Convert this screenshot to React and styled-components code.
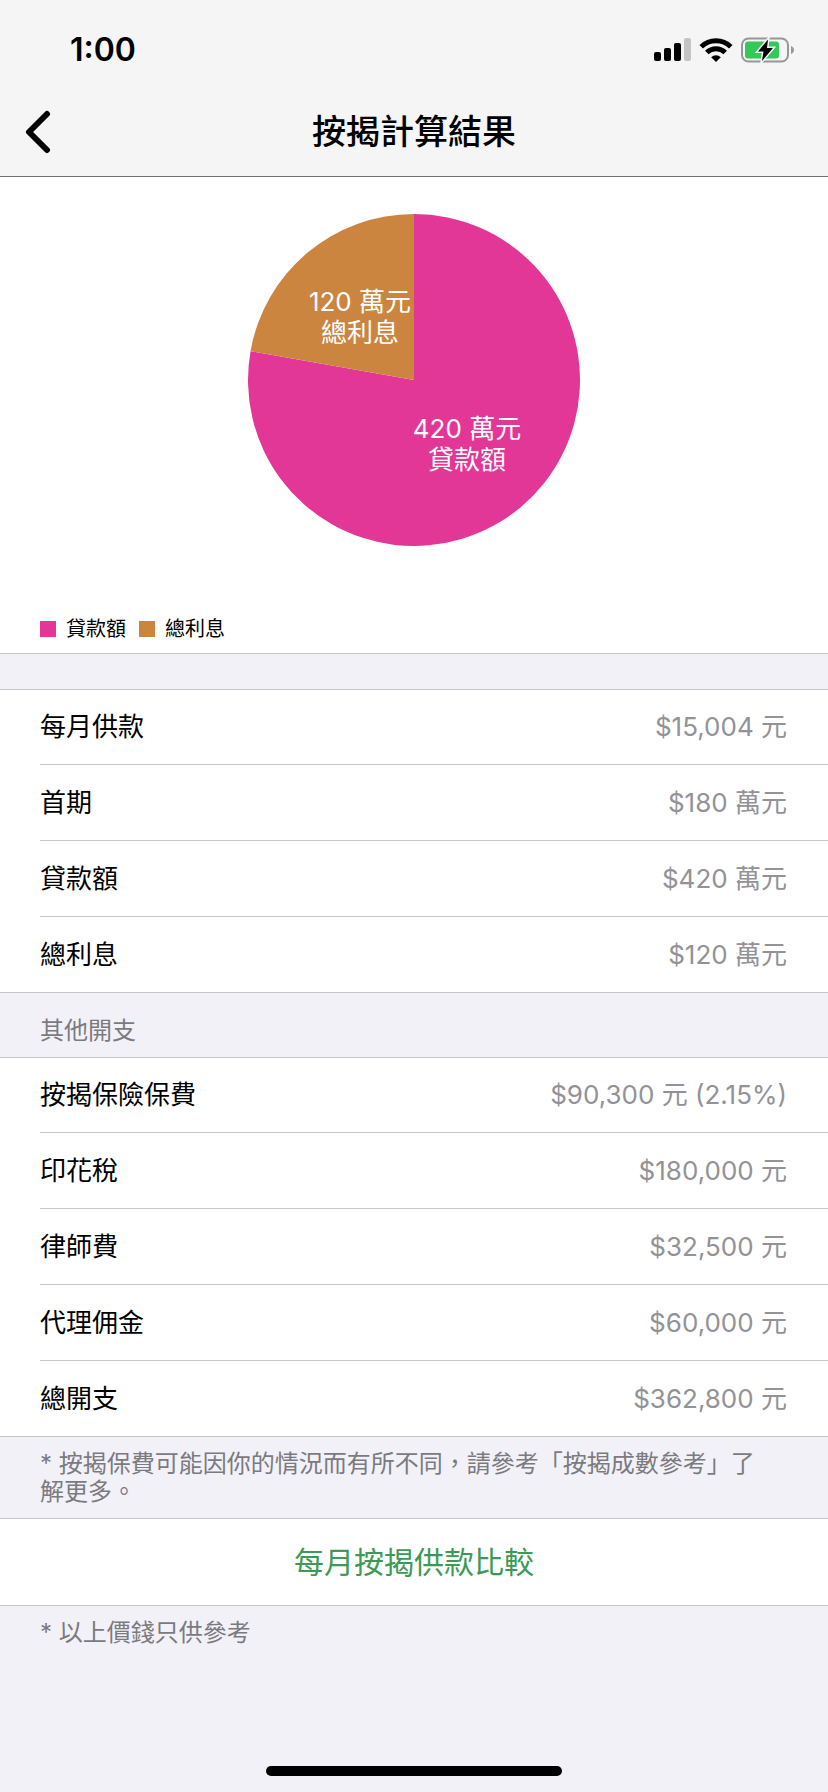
import styled, { createGlobalStyle } from 'styled-components';

const style = {
  pink: '#e23797',
  orange: '#cc853f',
  green: '#3c9a56',
  barColor: '#f5f5f5',
  pageColor: '#f2f1f7',
  lineColor: '#c6c6c8',
  valueColor: '#929297',
  noteColor: '#7a7a7f',
};

const GlobalStyle = createGlobalStyle`
  * {
    box-sizing: border-box;
  }

  body {
    margin: 0;
    background-color: ${style.pageColor};
    color: #000;
    font-family: Inter, 'Noto Sans CJK TC', sans-serif;
  }
`;

const Screen = styled.div`
  display: flex;
  flex-direction: column;
  min-height: 100vh;
`;

const StatusBar = styled.div`
  display: flex;
  justify-content: space-between;
  align-items: center;
  height: 100px;
  padding: 0 33px 0 70px;
  background-color: ${style.barColor};
`;

const Time = styled.time`
  font-size: 32px;
  font-weight: 600;
  line-height: 40px;
`;

const StatusIcons = styled.div`
  display: flex;
  align-items: center;
  gap: 8px;
`;

const NavBar = styled.header`
  display: grid;
  grid-template-columns: 1fr auto 1fr;
  align-items: center;
  height: 77px;
  padding: 0 24px 12px;
  border-bottom: 1px solid #6f6f72;
  background-color: ${style.barColor};
`;

const BackButton = styled.button`
  justify-self: start;
  display: flex;
  padding: 0;
  border: none;
  background: none;
  cursor: pointer;
`;

const Title = styled.h1`
  margin: 0;
  font-size: 34px;
  font-weight: 500;
  line-height: 44px;
`;

const ChartPanel = styled.section`
  padding: 37px 40px 10px;
  border-bottom: 1px solid ${style.lineColor};
  background-color: #fff;
`;

const Pie = styled.svg`
  display: block;
  margin: 0 auto;
`;

const PieLabel = styled.text`
  fill: #fff;
  font-size: 26px;
  text-anchor: middle;
`;

const Legend = styled.ul`
  display: flex;
  gap: 13px;
  margin: 69px 0 0;
  padding: 0;
  list-style: none;
`;

const LegendItem = styled.li`
  display: flex;
  align-items: center;
  gap: 10px;
  font-size: 20px;
  line-height: 28px;
`;

const Swatch = styled.span`
  width: 16px;
  height: 16px;
  background-color: ${props => props.$color};
`;

const Group = styled.dl`
  margin: ${props => (props.$spaced ? '35px' : '0')} 0 0;
  padding-left: 40px;
  border-top: 1px solid ${style.lineColor};
  border-bottom: 1px solid ${style.lineColor};
  background-color: #fff;
`;

const Row = styled.div`
  display: flex;
  justify-content: space-between;
  align-items: center;
  height: 76px;
  padding-right: 41px;
  font-size: 26px;
  line-height: 36px;

  &:first-child,
  &:last-child {
    height: 75px;
  }

  &:not(:last-child) {
    border-bottom: 1px solid ${style.lineColor};
  }
`;

const Name = styled.dt``;

const Value = styled.dd`
  margin: 0;
  color: ${style.valueColor};
`;

const SectionTitle = styled.h2`
  margin: 0;
  padding: 20px 40px 8px;
  color: ${style.noteColor};
  font-size: 24px;
  font-weight: 400;
  line-height: 36px;
`;

const Note = styled.p`
  margin: 0;
  padding: 13px 60px 12px 40px;
  color: ${style.noteColor};
  font-size: 24px;
  line-height: 28px;
`;

const CompareButton = styled.button`
  height: 88px;
  padding: 0 0 4px;
  border: solid ${style.lineColor};
  border-width: 1px 0;
  background-color: #fff;
  color: ${style.green};
  font-family: inherit;
  font-size: 30px;
  cursor: pointer;
`;

const HomeIndicator = styled.div`
  width: 296px;
  height: 10px;
  margin: auto auto 16px;
  border-radius: 5px;
  background-color: #000;
`;

const slices = [
  { name: '貸款額', amount: 420, color: style.pink, x: 219, y: 224 },
  { name: '總利息', amount: 120, color: style.orange, x: 112, y: 97 },
];

const payments = [
  ['每月供款', '$15,004 元'],
  ['首期', '$180 萬元'],
  ['貸款額', '$420 萬元'],
  ['總利息', '$120 萬元'],
];

const expenses = [
  ['按揭保險保費', '$90,300 元 (2.15%)'],
  ['印花稅', '$180,000 元'],
  ['律師費', '$32,500 元'],
  ['代理佣金', '$60,000 元'],
  ['總開支', '$362,800 元'],
];

const RADIUS = 166;

const getPoint = share => {
  const angle = share * 2 * Math.PI;
  return `${RADIUS + RADIUS * Math.sin(angle)} ${
    RADIUS - RADIUS * Math.cos(angle)
  }`;
};

function PieChart() {
  const total = slices.reduce((sum, slice) => sum + slice.amount, 0);
  let start = 0;

  return (
    <Pie width={RADIUS * 2} height={RADIUS * 2}>
      {slices.map(({ name, amount, color }) => {
        const end = start + amount / total;
        const large = end - start > 0.5 ? 1 : 0;
        const d = `M${RADIUS} ${RADIUS} L${getPoint(start)} A${RADIUS} ${RADIUS} 0 ${large} 1 ${getPoint(end)} Z`;
        start = end;
        return <path key={name} d={d} fill={color} />;
      })}
      {slices.map(({ name, amount, x, y }) => (
        <PieLabel key={name}>
          <tspan x={x} y={y}>
            {amount} 萬元
          </tspan>
          <tspan x={x} y={y + 31}>
            {name}
          </tspan>
        </PieLabel>
      ))}
    </Pie>
  );
}

function List({ items, spaced }) {
  return (
    <Group $spaced={spaced}>
      {items.map(([name, value]) => (
        <Row key={name}>
          <Name>{name}</Name>
          <Value>{value}</Value>
        </Row>
      ))}
    </Group>
  );
}

function SignalIcon() {
  return (
    <svg width="37" height="24" viewBox="0 0 37 24">
      <rect x="0" y="14" width="7" height="9" rx="2" />
      <rect x="10" y="10" width="7" height="13" rx="2" />
      <rect x="20" y="5" width="7" height="18" rx="2" />
      <rect x="30" y="0" width="7" height="23" rx="2" fill="#c4c4c4" />
    </svg>
  );
}

function WifiIcon() {
  return (
    <svg width="34" height="24" viewBox="0 0 34 24">
      <g fill="none" stroke="#000" strokeWidth="5">
        <path d="M2.2 8.8 A21 21 0 0 1 31.8 8.8" />
        <path d="M7.800 14.600 A13 13 0 0 1 26.200 14.600" />
      </g>
      <path d="M17 24 L12.200 19.200 A6.800 6.800 0 0 1 21.800 19.200 Z" />
    </svg>
  );
}

function BatteryIcon() {
  return (
    <svg width="54" height="26" viewBox="0 0 54 26">
      <rect
        x="1"
        y="1.5"
        width="46"
        height="23"
        rx="6.5"
        fill="none"
        stroke="#979797"
        strokeWidth="2"
      />
      <path d="M50 9 C54 10.5 54 15.5 50 17 Z" fill="#979797" />
      <rect x="4" y="4.5" width="34" height="17" rx="3" fill="#34c759" />
      <path
        d="M27 2.500 L17 14.500 H22.500 L21 24 L32 11 H26 Z"
        stroke={style.barColor}
        strokeWidth="3"
        paintOrder="stroke"
      />
    </svg>
  );
}

export default function App() {
  return (
    <Screen>
      <GlobalStyle />
      <StatusBar>
        <Time>1:00</Time>
        <StatusIcons>
          <SignalIcon />
          <WifiIcon />
          <BatteryIcon />
        </StatusIcons>
      </StatusBar>
      <NavBar>
        <BackButton type="button" aria-label="返回">
          <svg width="28" height="44" viewBox="0 0 28 44">
            <path
              d="M23 4 L5 22 L23 40"
              fill="none"
              stroke="#000"
              strokeWidth="6"
              strokeLinecap="round"
              strokeLinejoin="round"
            />
          </svg>
        </BackButton>
        <Title>按揭計算結果</Title>
      </NavBar>
      <ChartPanel>
        <PieChart />
        <Legend>
          {slices.map(({ name, color }) => (
            <LegendItem key={name}>
              <Swatch $color={color} />
              {name}
            </LegendItem>
          ))}
        </Legend>
      </ChartPanel>
      <List items={payments} spaced />
      <SectionTitle>其他開支</SectionTitle>
      <List items={expenses} />
      <Note>
        * 按揭保費可能因你的情況而有所不同，請參考「按揭成數參考」了解更多。
      </Note>
      <CompareButton type="button">每月按揭供款比較</CompareButton>
      <Note>* 以上價錢只供參考</Note>
      <HomeIndicator />
    </Screen>
  );
}
